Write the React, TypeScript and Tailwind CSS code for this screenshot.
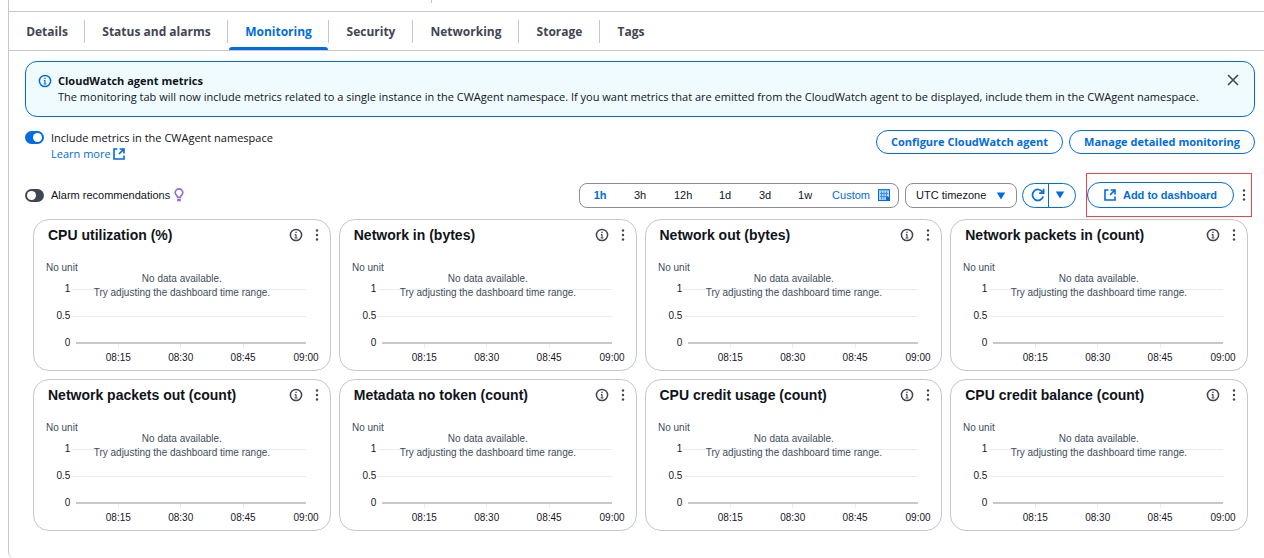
import { useState } from "react";

const ui = "font-['Open_Sans','Noto_Sans',sans-serif]";

const tabs = [
  { name: "Details", width: "w-[76px]" },
  { name: "Status and alarms", width: "w-[143px]" },
  { name: "Monitoring", width: "w-[101px]" },
  { name: "Security", width: "w-[84px]" },
  { name: "Networking", width: "w-[106px]" },
  { name: "Storage", width: "w-[81px]" },
  { name: "Tags", width: "w-[62px]" },
];

const ranges = [
  { name: "1h", width: "w-[38px]" },
  { name: "3h", width: "w-[42px]" },
  { name: "12h", width: "w-[44px]" },
  { name: "1d", width: "w-[40px]" },
  { name: "3d", width: "w-[40px]" },
  { name: "1w", width: "w-[40px]" },
];

const metrics = [
  "CPU utilization (%)",
  "Network in (bytes)",
  "Network out (bytes)",
  "Network packets in (count)",
  "Network packets out (count)",
  "Metadata no token (count)",
  "CPU credit usage (count)",
  "CPU credit balance (count)",
];

function InfoIcon({ className }: { className: string }) {
  return (
    <svg viewBox="0 0 14 14" className={className} fill="none" stroke="currentColor" strokeWidth="1.5" aria-hidden="true">
      <circle cx="7" cy="7" r="5.6" />
      <path d="M7 6.2V10M5.8 6.6H7M5.6 10h2.8" strokeWidth="1.1" />
      <path d="M7 3.7v1.4" strokeWidth="1.4" />
    </svg>
  );
}

function ExternalIcon({ className }: { className: string }) {
  return (
    <svg viewBox="0 0 12 12" className={className} fill="none" stroke="currentColor" strokeWidth="1.6" aria-hidden="true">
      <path d="M4.4 1H1v10h10V7.6M6.6 1H11v4.4M10.6 1.4 6 6" />
    </svg>
  );
}

function Kebab() {
  return (
    <svg viewBox="0 0 4 14" className="h-[14px] w-1" fill="currentColor" aria-hidden="true">
      <circle cx="2" cy="2.5" r="1.2" />
      <circle cx="2" cy="7" r="1.2" />
      <circle cx="2" cy="11.5" r="1.2" />
    </svg>
  );
}

function Caret() {
  return (
    <svg viewBox="0 0 10 8" className="h-2 w-[10px] text-[#006ce0]" fill="currentColor" aria-hidden="true">
      <path d="M.8.5h8.4L5 7.5z" />
    </svg>
  );
}

function EmptyChart() {
  return (
    <svg className="block h-[119px] w-full text-[10px]" fill="#16191f" role="img" aria-label="No data available">
      <g stroke="#e9ebed" shapeRendering="crispEdges">
        <line x1="13%" x2="92%" y1="39.5" y2="39.5" />
        <line x1="13%" x2="92%" y1="66.5" y2="66.5" />
        <line x1="28.5%" x2="28.5%" y1="94" y2="98" />
        <line x1="49.6%" x2="49.6%" y1="94" y2="98" />
        <line x1="70.7%" x2="70.7%" y1="94" y2="98" />
        <line x1="14.3%" x2="92%" y1="93" y2="93" stroke="#c8c8c8" strokeWidth="2" />
      </g>
      <text x="12" y="21" fill="#414d5c">No unit</text>
      <g textAnchor="end">
        <text x="12.3%" y="42">1</text>
        <text x="12.3%" y="69">0.5</text>
        <text x="12.3%" y="96">0</text>
      </g>
      <g textAnchor="middle">
        <text x="28.5%" y="111">08:15</text>
        <text x="49.6%" y="111">08:30</text>
        <text x="70.7%" y="111">08:45</text>
        <text x="92%" y="111">09:00</text>
        <g fill="#414d5c">
          <text x="50%" y="32">No data available.</text>
          <text x="50%" y="46">Try adjusting the dashboard time range.</text>
        </g>
      </g>
    </svg>
  );
}

function MetricCard({ title }: { title: string }) {
  return (
    <article className="h-[152px] rounded-2xl border border-[#c6c6cd] bg-white">
      <header className="flex h-[30px] items-center pr-[11px] pl-[14px]">
        <h2 className="flex-1 text-sm font-bold text-[#0f141a]">{title}</h2>
        <button type="button" aria-label={"About " + title} className="mr-3 text-[#424650]">
          <InfoIcon className="block size-[14px]" />
        </button>
        <button type="button" aria-label={title + " actions"} className="text-[#424650]">
          <Kebab />
        </button>
      </header>
      <EmptyChart />
    </article>
  );
}

const toggle =
  "flex h-[13px] w-[19px] shrink-0 appearance-none items-center rounded-full bg-[#424650] px-[2px] before:size-[9px] before:rounded-full before:bg-white checked:justify-end checked:bg-[#006ce0]";

export default function App() {
  const [tab, setTab] = useState("Monitoring");
  const [range, setRange] = useState("1h");
  const [agent, setAgent] = useState(true);
  const [alarms, setAlarms] = useState(false);
  const [banner, setBanner] = useState(true);

  return (
    <div className="overflow-hidden bg-white pl-2 font-['Liberation_Sans',Arial,sans-serif] text-[11px] text-[#0f141a]">
      <div className="h-[11px] border-l border-[#c6c6cd]">
        <div className="ml-[422px] h-[3px] w-px bg-[#c6c6cd]" />
      </div>
      <main className="h-[547px] rounded-bl-md border-t border-l border-[#c6c6cd]">
        <nav className={"flex h-[39px] items-stretch border-b border-[#c6c6cd] text-xs font-bold " + ui}>
          {tabs.map(({ name, width }, i) => (
            <button
              key={name}
              type="button"
              onClick={() => setTab(name)}
              className={
                "relative flex items-center justify-center pt-px whitespace-nowrap " +
                width +
                " " +
                (tab === name ? "text-[#006ce0]" : "text-[#424650]")
              }
            >
              {name}
              {i < tabs.length - 1 && <span className="absolute top-2 right-0 h-[23px] w-px bg-[#c6c6cd]" />}
              {tab === name && <span className="absolute right-px bottom-0 left-px h-[3px] rounded-t-sm bg-[#006ce0]" />}
            </button>
          ))}
        </nav>

        {banner && (
          <section className={"mt-[10px] mr-[9px] ml-4 flex h-14 items-start rounded-xl border border-[#006ce0] bg-[#f0fbff] pt-[11px] pl-3 " + ui}>
            <InfoIcon className="mt-px size-[14px] shrink-0 text-[#006ce0]" />
            <div className="ml-[6px] flex-1 text-[11px] leading-4">
              <h2 className="font-bold">CloudWatch agent metrics</h2>
              <p>
                The monitoring tab will now include metrics related to a single instance in the CWAgent namespace. If you want metrics that are emitted from the CloudWatch agent to be displayed, include them in the CWAgent namespace.
              </p>
            </div>
            <button type="button" aria-label="Dismiss" onClick={() => setBanner(false)} className="mt-px mr-[15px] text-[#424650]">
              <svg viewBox="0 0 12 12" className="size-3" fill="none" stroke="currentColor" strokeWidth="1.6" aria-hidden="true">
                <path d="m1 1 10 10M11 1 1 11" />
              </svg>
            </button>
          </section>
        )}

        <section className={"mt-[13px] mr-[9px] ml-4 flex h-8 items-start " + ui}>
          <input id="agent" type="checkbox" role="switch" checked={agent} onChange={() => setAgent(!agent)} className={"mt-px " + toggle} />
          <div className="ml-[7px] flex-1 text-[11px] leading-4">
            <label htmlFor="agent" className="block">Include metrics in the CWAgent namespace</label>
            <a href="#learn" className="inline-flex items-center gap-[2px] text-[#006ce0]">
              Learn more
              <ExternalIcon className="size-3" />
            </a>
          </div>
          <div className="flex gap-[6px] text-[11px] font-bold text-[#006ce0]">
            <button type="button" className="h-6 w-[187px] rounded-full border border-[#006ce0]">Configure CloudWatch agent</button>
            <button type="button" className="h-6 w-[186px] rounded-full border border-[#006ce0]">Manage detailed monitoring</button>
          </div>
        </section>

        <section className="mt-[11px] mr-3 ml-4 flex h-11 items-center">
          <input id="alarms" type="checkbox" role="switch" checked={alarms} onChange={() => setAlarms(!alarms)} className={toggle} />
          <label htmlFor="alarms" className="mr-1 ml-[7px]">Alarm recommendations</label>
          <svg viewBox="0 0 10 14" className="h-[14px] w-[10px] text-[#9469d6]" fill="none" stroke="currentColor" strokeWidth="1.6" aria-hidden="true">
            <path d="M3.6 9.2C3.6 7.6 1.2 7 1.2 4.7a3.8 3.8 0 0 1 7.6 0C8.8 7 6.4 7.6 6.4 9.2z" />
            <path d="M3.2 12h3.6" strokeWidth="2.6" />
          </svg>

          <div className="ml-auto flex h-[25px] items-center rounded-lg border border-[#8c8c94] pl-px">
            {ranges.map(({ name, width }) => (
              <button
                key={name}
                type="button"
                onClick={() => setRange(name)}
                className={width + " " + (range === name ? "font-bold text-[#006ce0]" : "")}
              >
                {name}
              </button>
            ))}
            <button type="button" className="mr-2 ml-[7px] flex items-center gap-2 text-[#006ce0]">
              Custom
              <svg viewBox="0 0 12 12" className="size-3" aria-hidden="true">
                <rect x=".5" y=".5" width="11" height="11" fill="#b8d8fb" stroke="#006ce0" />
                <path d="M0 1h12M2 4.5h8M2 7.5h8M3.5 2.5v8M6 2.5v8M8.5 2.5v5" stroke="#3d8fe8" />
                <path d="M8 8h4v4H8z" fill="#006ce0" />
              </svg>
            </button>
          </div>

          <div className="relative ml-[6px]">
            <select aria-label="Timezone" className="block h-[25px] w-28 appearance-none rounded-lg border border-[#8c8c94] pl-[10px]">
              <option>UTC timezone</option>
              <option>Local timezone</option>
            </select>
            <span className="pointer-events-none absolute top-[9px] right-[11px]"><Caret /></span>
          </div>

          <div className="ml-[5px] flex h-[25px] w-[54px] rounded-full border border-[#006ce0] text-[#006ce0]">
            <button type="button" aria-label="Refresh" className="flex flex-1 items-center justify-center pl-1">
              <svg viewBox="0 0 14 14" className="size-[14px]" fill="none" stroke="currentColor" strokeWidth="1.7" aria-hidden="true">
                <path d="M12.2 8.6A5.5 5.5 0 1 1 11.6 4M12.6 .8v4.4H8.2" />
              </svg>
            </button>
            <button type="button" aria-label="Refresh options" className="flex w-[27px] items-center justify-center border-l border-[#006ce0] pr-1">
              <Caret />
            </button>
          </div>

          <div className="ml-[10px] flex h-11 items-center border border-[#ec4545]">
            <button type="button" className="flex h-[26px] w-[147px] items-center justify-center gap-[7px] rounded-full border border-[#006ce0] font-bold text-[#006ce0]">
              <ExternalIcon className="size-3" />
              Add to dashboard
            </button>
            <button type="button" aria-label="Dashboard actions" className="mr-[5px] ml-2 text-[#424650]"><Kebab /></button>
          </div>
        </section>

        <section className="mt-[2px] mr-4 ml-6 grid grid-cols-4 gap-2">
          {metrics.map((title) => (
            <MetricCard key={title} title={title} />
          ))}
        </section>
      </main>
    </div>
  );
}
